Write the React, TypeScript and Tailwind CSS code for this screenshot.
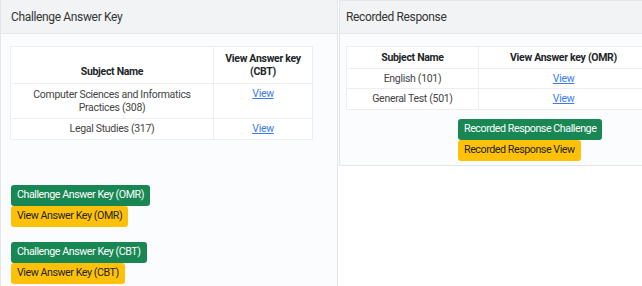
import React from "react";

const font = { fontFamily: "Roboto, 'Noto Sans', sans-serif" };

function Btn({ kind, children }: { kind: "g" | "y"; children: React.ReactNode }) {
  return (
    <div
      className={
        kind === "g"
          ? "inline-flex items-center h-[21px] px-[6px] rounded-[3px] bg-[#198754] text-white text-[10.7px] tracking-[-0.45px] leading-none"
          : "inline-flex items-center h-[21px] px-[6px] rounded-[3px] bg-[#ffc107] text-[#212529] text-[10.7px] tracking-[-0.45px] leading-none"
      }
    >
      {children}
    </div>
  );
}

export default function App() {
  return (
    <div style={font} className="w-[642px] h-[286px] overflow-hidden bg-white flex text-[#212529]">
      {/* Left card */}
      <div className="w-[338px] shrink-0 h-[286px] border-l border-r border-[#e3e5e8] bg-[#fbfcfd] flex flex-col">
        <div className="h-[34px] bg-[#f2f3f5] border-b border-[#e6e8eb] flex items-center pl-[10px] text-[12px] tracking-[-0.35px] text-[#333]">
          Challenge Answer Key
        </div>
        <div className="pl-[9px] pt-[12px]">
          <table className="border-collapse text-[10.5px] tracking-[-0.3px] leading-[13.5px] bg-white text-center">
            <thead>
              <tr className="h-[37px]">
                <th className="w-[203px] border border-[#eceef0] font-bold align-bottom pb-[5px]">Subject Name</th>
                <th className="w-[99px] border border-[#eceef0] font-bold">
                  View Answer key
                  <br />
                  (CBT)
                </th>
              </tr>
            </thead>
            <tbody>
              <tr className="h-[35px]">
                <td className="border border-[#eceef0] text-[#444]">
                  Computer Sciences and Informatics
                  <br />
                  Practices (308)
                </td>
                <td className="border border-[#eceef0] align-top pt-[3px]">
                  <span className="text-[#3b7bf0] underline">View</span>
                </td>
              </tr>
              <tr className="h-[21px]">
                <td className="border border-[#eceef0] text-[#444]">Legal Studies (317)</td>
                <td className="border border-[#eceef0]">
                  <span className="text-[#3b7bf0] underline">View</span>
                </td>
              </tr>
            </tbody>
          </table>
        </div>
        <div className="pl-[10px] mt-[45px] flex flex-col items-start">
          <Btn kind="g">Challenge Answer Key (OMR)</Btn>
          <Btn kind="y">View Answer Key (OMR)</Btn>
          <div className="h-[15px]" />
          <Btn kind="g">Challenge Answer Key (CBT)</Btn>
          <Btn kind="y">View Answer Key (CBT)</Btn>
        </div>
      </div>

      {/* Right card */}
      <div className="ml-[1px] w-[384px] shrink-0 self-start border border-[#e3e5e8] bg-[#fbfcfd] flex flex-col">
        <div className="h-[33px] bg-[#f2f3f5] border-b border-[#e6e8eb] flex items-center pl-[6px] text-[12px] tracking-[-0.35px] text-[#333]">
          Recorded Response
        </div>
        <div className="pl-[6px] pt-[12px]">
          <table className="border-collapse text-[10.5px] tracking-[-0.3px] leading-[13.5px] bg-white text-center">
            <thead>
              <tr className="h-[22px]">
                <th className="w-[132px] border border-[#eceef0] font-bold">Subject Name</th>
                <th className="w-[170px] border border-[#eceef0] font-bold">View Answer key (OMR)</th>
              </tr>
            </thead>
            <tbody>
              <tr className="h-[20px]">
                <td className="border border-[#eceef0] text-[#444]">English (101)</td>
                <td className="border border-[#eceef0]">
                  <span className="text-[#3b7bf0] underline">View</span>
                </td>
              </tr>
              <tr className="h-[21px]">
                <td className="border border-[#eceef0] text-[#444]">General Test (501)</td>
                <td className="border border-[#eceef0]">
                  <span className="text-[#3b7bf0] underline">View</span>
                </td>
              </tr>
            </tbody>
          </table>
        </div>
        <div className="mt-[9px] mb-[4px] flex flex-col items-start pl-[118px]">
          <Btn kind="g">Recorded Response Challenge</Btn>
          <Btn kind="y">Recorded Response View</Btn>
        </div>
      </div>
    </div>
  );
}
